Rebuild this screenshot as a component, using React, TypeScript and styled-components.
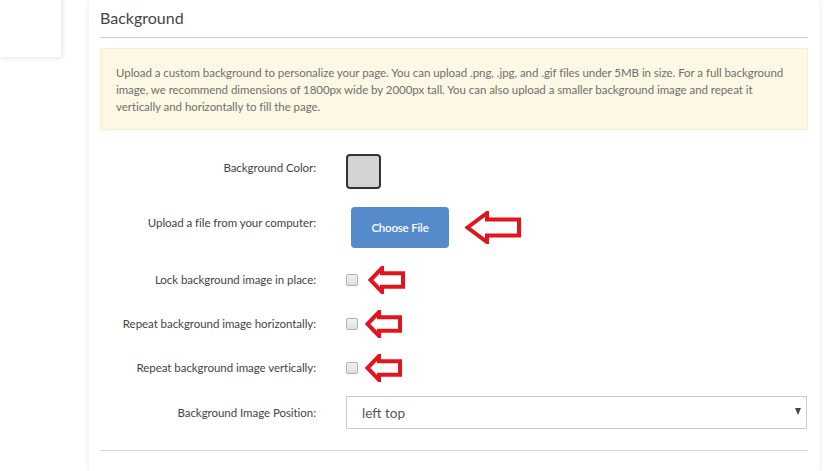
import React from "react";
import styled, { createGlobalStyle } from "styled-components";

const GlobalStyle = createGlobalStyle`
  html, body { margin: 0; padding: 0; background: #ffffff; }
  body { font-family: Lato, "Liberation Sans", sans-serif; color: #444; }
  * { box-sizing: border-box; }
`;

const Page = styled.div`
  display: flex;
  align-items: flex-start;
  width: 833px;
  height: 471px;
  overflow: hidden;
`;

const SideCard = styled.div`
  width: 61px;
  height: 67px;
  margin-top: -10px;
  background: #fff;
  box-shadow: 1px 1px 5px rgba(0, 0, 0, 0.12);
  flex: none;
`;

const Panel = styled.div`
  margin-left: 28px;
  width: 730px;
  height: 471px;
  background: #fff;
  box-shadow: 0 0 6px rgba(0, 0, 0, 0.1);
  padding: 0 11px;
  flex: none;
`;

const Heading = styled.h2`
  margin: 6px 0 0;
  font-size: 16px;
  font-weight: 400;
  line-height: 24px;
  color: #444;
  padding-bottom: 7px;
  border-bottom: 1px solid #cfcfcf;
`;

const Alert = styled.div`
  margin-top: 10px;
  background: #fcf8e3;
  border: 1px solid #f5efd2;
  padding: 15px 15px 14px;
  font-size: 11.5px;
  letter-spacing: -0.05px;
  line-height: 17px;
  color: #6f6f6f;
`;

const Form = styled.div`
  display: flex;
  flex-direction: column;
`;

const Row = styled.div<{ $top: number; $height: number }>`
  display: grid;
  grid-template-columns: 216px 1fr;
  column-gap: 30px;
  align-items: center;
  margin-top: ${(p) => p.$top}px;
  height: ${(p) => p.$height}px;
`;

const Label = styled.div<{ $shift?: number }>`
  text-align: right;
  font-size: 11.5px;
  letter-spacing: -0.05px;
  color: #444;
  white-space: nowrap;
  transform: translateY(${(p) => p.$shift ?? 0}px);
`;

const Control = styled.div<{ $gap?: number; $indent?: number }>`
  display: flex;
  align-items: center;
  gap: ${(p) => p.$gap ?? 10}px;
  padding-left: ${(p) => p.$indent ?? 0}px;
  height: 100%;
`;

const Swatch = styled.div`
  width: 35px;
  height: 35px;
  border: 2px solid #333;
  border-radius: 4px;
  background: #d3d3d3;
`;

const FileButton = styled.button`
  width: 98px;
  height: 41px;
  border: none;
  border-radius: 4px;
  background: #558bca;
  color: #fff;
  font-family: inherit;
  font-size: 11.5px;
  letter-spacing: -0.2px;
  font-weight: 600;
  cursor: pointer;
`;

const Check = styled.input.attrs({ type: "checkbox" })`
  appearance: none;
  margin: 0;
  width: 12px;
  height: 12px;
  border: 1px solid #b3b3b3;
  border-radius: 2px;
  background: linear-gradient(#f2f2f2, #dedede);
  flex: none;
`;

const SelectWrap = styled.div`
  position: relative;
  width: 461px;
  height: 33px;
`;

const Select = styled.select`
  appearance: none;
  width: 100%;
  height: 100%;
  border: 1px solid #cccccc;
  border-radius: 0;
  background: #fff;
  padding: 0 15px;
  font-family: inherit;
  font-size: 13.5px;
  color: #555;
  outline: none;
`;

const Caret = styled.span`
  position: absolute;
  right: 6px;
  top: 12px;
  width: 0;
  height: 0;
  border-left: 3.5px solid transparent;
  border-right: 3.5px solid transparent;
  border-top: 7px solid #444;
  pointer-events: none;
`;

const Divider = styled.div`
  margin-top: 21px;
  border-top: 1px solid #d3d3d3;
`;

const ArrowSvg = styled.svg`
  display: block;
  flex: none;
`;

function RedArrow({ w, h, head }: { w: number; h: number; head: number }) {
  const shaftTop = h * 0.26;
  const shaftBottom = h * 0.74;
  const pts = [
    [2.5, h / 2],
    [head, 2],
    [head, shaftTop],
    [w - 2, shaftTop],
    [w - 2, shaftBottom],
    [head, shaftBottom],
    [head, h - 2],
  ]
    .map((p) => p.join(","))
    .join(" ");
  return (
    <ArrowSvg width={w} height={h} viewBox={`0 0 ${w} ${h}`}>
      <polygon
        points={pts}
        fill="#fff"
        stroke="#e0151e"
        strokeWidth={4}
        strokeLinejoin="miter"
      />
    </ArrowSvg>
  );
}

const checkRows = [
  { label: "Lock background image in place:", top: 18, gap: 10 },
  { label: "Repeat background image horizontally:", top: 16, gap: 7 },
  { label: "Repeat background image vertically:", top: 16, gap: 7 },
];

export default function App() {
  return (
    <>
      <GlobalStyle />
      <Page>
        <SideCard />
        <Panel>
          <Heading>Background</Heading>
          <Alert>
            Upload a custom background to personalize your page. You can upload
            .png, .jpg, and .gif files under 5MB in size. For a full background
            image, we recommend dimensions of 1800px wide by 2000px tall. You can
            also upload a smaller background image and repeat it vertically and
            horizontally to fill the page.
          </Alert>
          <Form>
            <Row $top={24} $height={34}>
              <Label $shift={-4}>Background Color:</Label>
              <Control>
                <Swatch />
              </Control>
            </Row>
            <Row $top={19} $height={41}>
              <Label $shift={-5}>Upload a file from your computer:</Label>
              <Control $gap={16} $indent={5}>
                <FileButton>Choose File</FileButton>
                <RedArrow w={56} h={33} head={22} />
              </Control>
            </Row>
            {checkRows.map((r) => (
              <Row key={r.label} $top={r.top} $height={28}>
                <Label $shift={-1}>{r.label}</Label>
                <Control $gap={r.gap}>
                  <Check />
                  <RedArrow w={37} h={28} head={14} />
                </Control>
              </Row>
            ))}
            <Row $top={14} $height={33}>
              <Label>Background Image Position:</Label>
              <Control>
                <SelectWrap>
                  <Select defaultValue="left top">
                    <option>left top</option>
                    <option>left center</option>
                    <option>left bottom</option>
                    <option>center top</option>
                    <option>center center</option>
                    <option>right top</option>
                  </Select>
                  <Caret />
                </SelectWrap>
              </Control>
            </Row>
          </Form>
          <Divider />
        </Panel>
      </Page>
    </>
  );
}
